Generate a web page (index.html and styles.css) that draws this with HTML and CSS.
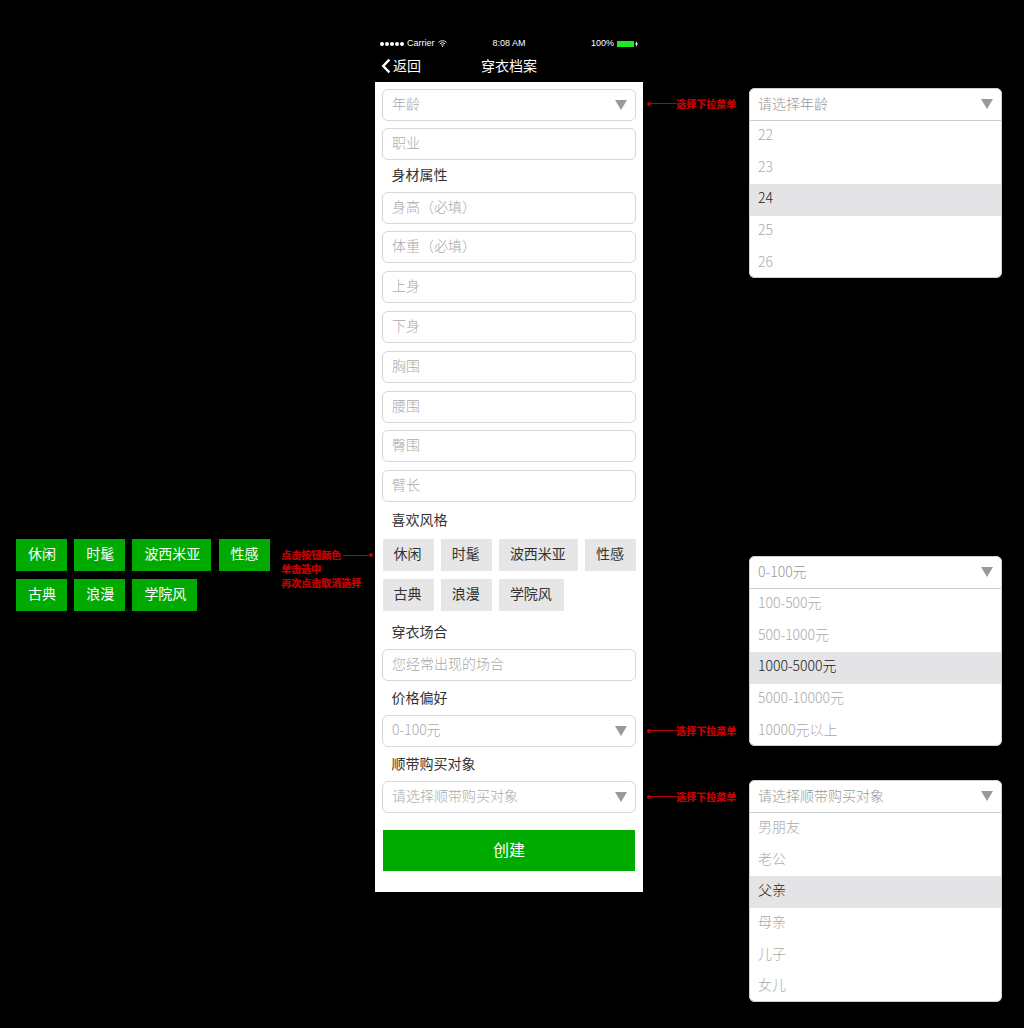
FILE: index.html
```html
<!DOCTYPE html>
<html lang="zh">
<head>
<meta charset="utf-8">
<title>穿衣档案</title>
<link rel="stylesheet" href="styles.css">
</head>
<body>
<main class="canvas">
  <section class="phone">
    <div class="status">
      <div class="status-left">
        <span class="dots"><i></i><i></i><i></i><i></i><i></i></span>
        <span>Carrier</span>
        <svg class="wifi" width="9" height="7" viewBox="0 0 9 7"><path d="M.5 2.4a5.6 5.6 0 0 1 8 0M1.9 3.8a3.7 3.7 0 0 1 5.2 0M3.2 5.1a1.8 1.8 0 0 1 2.6 0" fill="none" stroke="#fff" stroke-width=".9"/><circle cx="4.5" cy="6.2" r=".7" fill="#fff"/></svg>
      </div>
      <div class="status-time">8:08 AM</div>
      <div class="status-right">
        <span>100%</span>
        <span class="battery"></span>
        <svg width="3" height="6" viewBox="0 0 3 6"><path d="M1.9 0 0 3.3h1.1L.9 6 3 2.6H1.8z" fill="#fff"/></svg>
      </div>
    </div>
    <div class="nav">
      <svg class="back-icon" width="10" height="16" viewBox="0 0 10 16"><path d="M8.4 1.6 2.2 8l6.2 6.4" fill="none" stroke="#fff" stroke-width="2.4"/></svg>
      <span class="back">返回</span>
      <span class="nav-title">穿衣档案</span>
    </div>
    <form class="form">
      <div class="field select"><span>年龄</span><i class="caret"></i></div>
      <div class="field"><span>职业</span></div>
      <div class="label label-body">身材属性</div>
      <div class="field"><span>身高（必填）</span></div>
      <div class="field"><span>体重（必填）</span></div>
      <div class="field"><span>上身</span></div>
      <div class="field"><span>下身</span></div>
      <div class="field"><span>胸围</span></div>
      <div class="field"><span>腰围</span></div>
      <div class="field"><span>臀围</span></div>
      <div class="field"><span>臂长</span></div>
      <div class="label label-style">喜欢风格</div>
      <div class="tags tags-plain">
        <span>休闲</span><span>时髦</span><span>波西米亚</span><span>性感</span>
        <span>古典</span><span>浪漫</span><span>学院风</span>
      </div>
      <div class="label label-occasion">穿衣场合</div>
      <div class="field"><span>您经常出现的场合</span></div>
      <div class="label label-small">价格偏好</div>
      <div class="field select"><span>0-100元</span><i class="caret"></i></div>
      <div class="label label-small">顺带购买对象</div>
      <div class="field select"><span>请选择顺带购买对象</span><i class="caret"></i></div>
      <div class="create">创建</div>
    </form>
  </section>

  <div class="tags tags-green">
    <span>休闲</span><span>时髦</span><span>波西米亚</span><span>性感</span>
    <span>古典</span><span>浪漫</span><span>学院风</span>
  </div>

  <div class="note note-tags">
    <div class="note-first"><span>点击按钮颜色</span><b class="line line-long"></b><i class="dot"></i></div>
    <div>单击选中</div>
    <div>再次点击取消选择</div>
  </div>

  <div class="note note-sel note-age"><i class="dot"></i><b class="line"></b><span>选择下拉菜单</span></div>
  <div class="note note-sel note-price"><i class="dot"></i><b class="line"></b><span>选择下拉菜单</span></div>
  <div class="note note-sel note-buy"><i class="dot"></i><b class="line"></b><span>选择下拉菜单</span></div>

  <div class="menu menu-age">
    <div class="menu-head"><span>请选择年龄</span><i class="caret"></i></div>
    <div class="menu-row">22</div><div class="menu-row">23</div><div class="menu-row on">24</div><div class="menu-row">25</div><div class="menu-row">26</div>
  </div>
  <div class="menu menu-price">
    <div class="menu-head"><span>0-100元</span><i class="caret"></i></div>
    <div class="menu-row">100-500元</div><div class="menu-row">500-1000元</div><div class="menu-row on">1000-5000元</div><div class="menu-row">5000-10000元</div><div class="menu-row">10000元以上</div>
  </div>
  <div class="menu menu-buy">
    <div class="menu-head"><span>请选择顺带购买对象</span><i class="caret"></i></div>
    <div class="menu-row">男朋友</div><div class="menu-row">老公</div><div class="menu-row on">父亲</div><div class="menu-row">母亲</div><div class="menu-row">儿子</div><div class="menu-row">女儿</div>
  </div>
</main>
</body>
</html>
```
FILE: styles.css
```css
* { box-sizing: border-box; }
html, body { margin: 0; background: #000; }
body {
  font-family: "Noto Sans CJK SC", "Liberation Sans", sans-serif;
  font-size: 14px;
  color: #333;
}
.canvas { position: relative; width: 1024px; height: 1028px; overflow: hidden; background: #000; }

/* phone */
.phone { position: absolute; left: 375px; top: 36px; width: 268px; }
.status {
  display: grid;
  grid-template-columns: 1fr auto 1fr;
  align-items: center;
  height: 15px;
  padding: 0 5px;
  color: #fff;
  font: 9px/15px "Liberation Sans", sans-serif;
}
.status-left { display: flex; align-items: center; gap: 3px; }
.dots { display: flex; gap: 1px; }
.dots i { width: 4px; height: 4px; border-radius: 50%; background: #fff; }
.status-time { text-align: center; }
.status-right { display: flex; align-items: center; justify-content: flex-end; gap: 3px; }
.battery { width: 17px; height: 6px; background: #1ee81e; margin-right: -2px; }
.nav { position: relative; display: flex; align-items: center; height: 31px; padding: 0 0 1px 6px; color: #fff; }
.back-icon { margin-right: 2px; }
.back { line-height: 20px; position: relative; top: -1px; }
.nav-title { position: absolute; left: 106px; top: 4px; line-height: 20px; }

.form { display: flex; flex-direction: column; height: 810px; padding: 6.5px 7px 0; background: #fff; }
.field {
  display: flex;
  align-items: center;
  justify-content: space-between;
  flex: none;
  height: 32px;
  margin-bottom: 7.8px;
  padding: 0 9px 4px;
  border: 1px solid #d6d6d6;
  border-radius: 6px;
  color: #aaa;
  font-weight: 300;
  line-height: 20px;
}
.caret {
  width: 0; height: 0;
  border-left: 6.5px solid transparent;
  border-right: 6.5px solid transparent;
  border-top: 10px solid #999;
}
.field .caret { margin: 4px -1px 0 0; }
.label { flex: none; height: 20px; padding-left: 9.5px; line-height: 20px; color: #333; }
.label-body { margin: -4.1px 0 7.6px; }
.label-style { margin: -1px 0 10px; }
.label-occasion { margin: 10px 0 8px; }
.label-small { margin: -1.8px 0 8px; }

.tags { display: flex; flex-wrap: wrap; gap: 8px 7.2px; }
.tags span { height: 32px; line-height: 28px; white-space: nowrap; }
.tags-plain { flex: none; margin-left: .5px; width: 256px; }
.tags-plain span { padding: 0 12px 0 11px; background: #e6e6e6; color: #333; }
.tags-green { position: absolute; left: 16px; top: 539px; width: 256px; }
.tags-green span { padding: 0 11px 0 12px; background: #0a0; color: #fff; }

.create {
  flex: none;
  height: 41px;
  margin: 9.2px 0 0 1px;
  width: 252px;
  background: #00ab00;
  color: #fff;
  font-size: 16px;
  line-height: 39px;
  text-align: center;
}

/* annotations */
.note { position: absolute; color: #c00000; font-size: 10px; font-weight: 700; line-height: 14px; text-shadow: .4px 0 0 #c00000; }
.note-sel { display: flex; align-items: center; left: 647px; height: 13px; white-space: nowrap; }
.note-age { top: 97px; }
.note-price { top: 724px; }
.note-buy { top: 790px; }
.note-tags { left: 281px; top: 548px; width: 92px; white-space: nowrap; }
.note-first { display: flex; align-items: center; }
.line { display: block; width: 25px; height: 1px; background: #c00000; }
.line-long { width: 27px; margin-left: 2px; }
.dot { display: block; width: 4px; height: 4px; border-radius: 50%; background: #c00000; flex: none; }

/* drop-down panels */
.menu { position: absolute; left: 749px; width: 253px; background: #fff; border-radius: 6px; overflow: hidden; box-shadow: inset 0 0 0 1px #d0d0d0; }
.menu-age { top: 88px; height: 190px; }
.menu-price { top: 556px; height: 190px; }
.menu-buy { top: 780px; height: 222px; }
.menu-head {
  display: flex;
  align-items: center;
  justify-content: space-between;
  height: 33px;
  padding: 0 9px 2px;
  border-bottom: 1px solid #ccc;
  color: #999;
  font-weight: 300;
}
.menu-head .caret { margin-top: 2px; }
.menu-row { height: 31.7px; padding-left: 9px; color: #aaa; font-weight: 300; line-height: 26px; }
.menu-row.on { margin: 0 1px; padding-left: 8px; background: #e4e4e6; color: #222; }
```
